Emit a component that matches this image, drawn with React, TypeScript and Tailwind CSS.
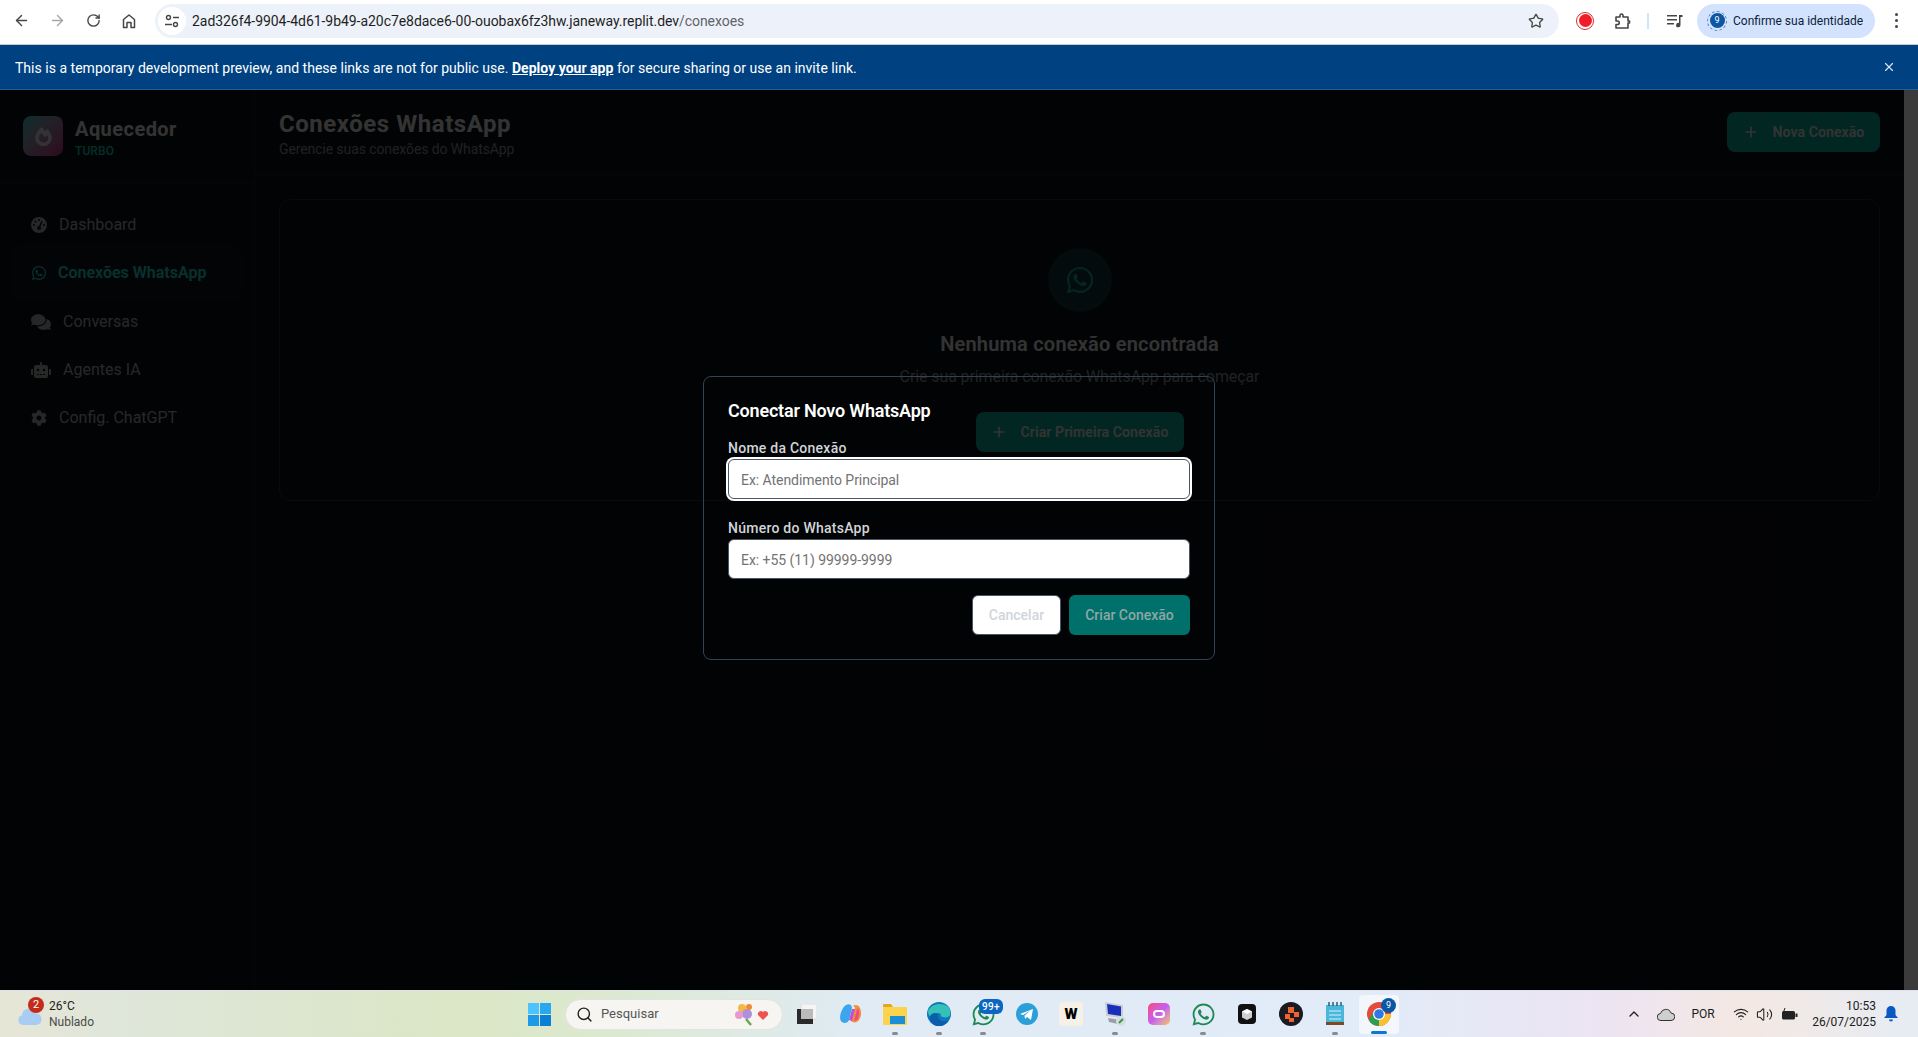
import React from "react";
import { ArrowLeft, ArrowRight, RotateCw, Star, X, Plus, Search, ChevronUp, Volume2, Wifi } from "lucide-react";
import { FaWhatsapp, FaComments, FaRobot, FaCog, FaFireAlt } from "react-icons/fa";
import { FaGaugeHigh } from "react-icons/fa6";

const nav = [
  { icon: <FaGaugeHigh size={16} />, label: "Dashboard", gap: "gap-[12px]", h: "h-[49px]" },
  { icon: <FaWhatsapp size={16} />, label: "Conexões WhatsApp", gap: "gap-[11px]", active: true, h: "h-[48px]" },
  { icon: <FaComments size={20} />, label: "Conversas", gap: "gap-[12px]", h: "h-[49px]" },
  { icon: <FaRobot size={20} />, label: "Agentes IA", gap: "gap-[12px]", h: "h-[48px]" },
  { icon: <FaCog size={16} />, label: "Config. ChatGPT", gap: "gap-[12px]", h: "h-[48px]" },
];

function Sidebar() {
  return (
    <aside className="w-[255px] shrink-0 bg-[#0d1117] border-r border-[#1a2027] flex flex-col">
      <div className="h-[93px] border-b border-[#1a2027] flex items-center pl-[23px] gap-[12px]">
        <div className="w-[40px] h-[40px] rounded-lg bg-gradient-to-br from-[#0fe0e0] to-[#e0199a] flex items-center justify-center text-white">
          <FaFireAlt size={19} />
        </div>
        <div className="flex flex-col mt-[2px]">
          <span className="text-[20px] leading-[28px] font-bold text-white tracking-[0.45px]">Aquecedor</span>
          <span className="text-[12px] leading-[16px] font-medium text-[#14e0ca] tracking-[0.1px]">TURBO</span>
        </div>
      </div>
      <nav className="px-[16px] pt-[17px] flex flex-col">
        {nav.map((n) => (
          <div
            key={n.label}
            className={`${n.h} rounded-lg flex items-center pl-[15px] ${n.gap} text-[16px] ${
              n.active ? "bg-[#10181c] text-[#2af0e6] font-semibold shadow-[0_0_12px_#14b8a620]" : "text-[#c4c4c4]"
            }`}
          >
            <span className="w-auto flex justify-center">{n.icon}</span>
            <span>{n.label}</span>
          </div>
        ))}
      </nav>
    </aside>
  );
}

function WhatsBtn({ label, w }: { label: string; w: string }) {
  return (
    <button className={`${w} h-[40px] rounded-lg bg-[#0abfaa] text-white text-[14px] font-semibold tracking-[0.1px] flex items-center justify-center gap-[14px]`}>
      <Plus size={16} strokeWidth={2.5} />
      {label}
    </button>
  );
}

function MainArea() {
  return (
    <main className="flex-1 min-w-0 bg-[#0d1117] flex flex-col">
      <header className="h-[85px] border-b border-[#1a2027] flex items-center justify-between px-[24px]">
        <div className="flex flex-col mt-[1px]">
          <h1 className="text-[24px] leading-[32px] font-bold text-white tracking-[0.55px]">Conexões WhatsApp</h1>
          <p className="text-[14px] leading-[18px] text-[#9ca3af] tracking-[-0.1px]">Gerencie suas conexões do WhatsApp</p>
        </div>
        <WhatsBtn label="Nova Conexão" w="w-[153px]" />
      </header>
      <div className="pt-[24px] px-[24px]">
        <div className="h-[302px] rounded-xl border border-[#2a323c] bg-[#0d1117] flex flex-col items-center pt-[48px]">
          <div className="w-[64px] h-[64px] rounded-full bg-[#0f3a3c] flex items-center justify-center text-[#14b8a6]">
            <FaWhatsapp size={30} />
          </div>
          <h2 className="mt-[18px] text-[20px] leading-[28px] font-semibold text-white tracking-[0.2px]">Nenhuma conexão encontrada</h2>
          <p className="mt-[7px] text-[16px] leading-[24px] text-[#9ca3af] tracking-[-0.1px]">Crie sua primeira conexão WhatsApp para começar</p>
          <div className="mt-[23px]">
            <WhatsBtn label="Criar Primeira Conexão" w="w-[208px]" />
          </div>
        </div>
      </div>
    </main>
  );
}

function Modal() {
  return (
    <div className="absolute inset-0 bg-black/80 flex justify-center items-start pt-[286px]">
      <div className="w-[512px] h-[284px] rounded-lg border border-[#334155] px-[24px] pt-[22px]">
        <h3 className="text-[18px] leading-[24px] font-semibold text-white tracking-[-0.2px]">Conectar Novo WhatsApp</h3>
        <label className="block mt-[15px] text-[14px] leading-[20px] font-medium text-[#d1d5db] tracking-[0.25px]">Nome da Conexão</label>
        <input
          placeholder="Ex: Atendimento Principal"
          className="block w-full h-[40px] mt-[1px] rounded-md bg-white border border-[#475569] pl-[12px] pt-[2px] text-[14px] tracking-[-0.05px] outline-none ring-2 ring-white placeholder:text-[#737373]"
        />
        <label className="block mt-[19px] text-[14px] leading-[20px] font-medium text-[#d1d5db] tracking-[0.25px]">Número do WhatsApp</label>
        <input
          placeholder="Ex: +55 (11) 99999-9999"
          className="block w-full h-[40px] mt-[1px] rounded-md bg-white border border-[#475569] pl-[12px] pt-[2px] text-[14px] tracking-[-0.05px] outline-none placeholder:text-[#737373]"
        />
        <div className="mt-[16px] flex justify-end gap-[8px]">
          <button className="w-[89px] h-[40px] rounded-md bg-white border border-[#475569] text-[14px] font-medium text-[#d1d5db]">Cancelar</button>
          <button className="w-[121px] h-[40px] rounded-md bg-[#00706b] text-[14px] font-medium text-[#8ea7a5]">Criar Conexão</button>
        </div>
      </div>
    </div>
  );
}

function ChromeBar() {
  return (
    <div className="h-[45px] bg-white border-b border-[#c9c9c9] flex items-center text-[#444746] pb-[3px] shrink-0">
      <div className="flex items-center pl-[3px]">
        <span className="w-[36px] flex justify-center"><ArrowLeft size={17} strokeWidth={2} /></span>
        <span className="w-[36px] flex justify-center text-[#a6a6a6]"><ArrowRight size={17} strokeWidth={2} /></span>
        <span className="w-[36px] flex justify-center"><RotateCw size={15} strokeWidth={2.2} /></span>
        <span className="w-[36px] flex justify-center">
          <svg width="16" height="16" viewBox="0 0 16 16" fill="none" stroke="#444746" strokeWidth="1.5"><path d="M2.5 14.5V6.5L8 2l5.500 4.500v8h-3.500V9.500h-4v5z" strokeLinejoin="round" /></svg>
        </span>
      </div>
      <div className="ml-[8px] w-[1404px] h-[34px] rounded-full bg-[#edf2fa] flex items-center pl-[3px] pr-[15px]">
        <span className="w-[28px] h-[28px] rounded-full bg-white flex items-center justify-center">
          <svg width="16" height="16" viewBox="0 0 16 16" fill="none" stroke="#444746" strokeWidth="1.4"><circle cx="4.500" cy="4.500" r="2" /><path d="M9 4.500h6M1 11.500h7" /><circle cx="11.500" cy="11.500" r="2" /></svg>
        </span>
        <span className="ml-[6px] mt-[1px] text-[14px] text-[#1f1f1f] tracking-[-0.05px]">2ad326f4-9904-4d61-9b49-a20c7e8dace6-00-ouobax6fz3hw.janeway.replit.dev<span className="text-[#5f6368]">/conexoes</span></span>
        <span className="ml-auto"><Star size={16} strokeWidth={2} /></span>
      </div>
      <span className="ml-[17px] w-[18px] h-[18px] rounded-full border-[1.5px] border-[#d32f2f] flex items-center justify-center"><span className="block w-[13px] h-[13px] rounded-full bg-[#f01c28]" /></span>
      <span className="ml-[19px]">
        <svg width="18" height="18" viewBox="0 0 18 18" fill="none" stroke="#444746" strokeWidth="1.6" strokeLinejoin="round"><path d="M3 5h4V3.500a1.500 1.500 0 0 1 3 0V5h5v4h1.500v2H15v5H3v-3.500h1.500a1.500 1.500 0 0 0 0-3.500H3z" /></svg>
      </span>
      <span className="ml-[16px] w-[2px] h-[16px] bg-[#d3e3fd]" />
      <span className="ml-[18px]">
        <svg width="16" height="14" viewBox="0 0 16 14" fill="#444746"><rect x="0" y="1" width="10" height="1.500" /><rect x="0" y="5" width="10" height="1.500" /><rect x="0" y="9" width="7" height="1.500" /><path d="M12 1h3.500v2H13.500v8a2.200 2.200 0 1 1-1.500-2z" /></svg>
      </span>
      <div className="ml-[14px] w-[178px] h-[34px] rounded-full bg-[#d3e3fd] flex items-center pl-[10px]">
        <span className="shrink-0 w-[20px] h-[20px] rounded-full border border-dashed border-[#5b7fb5] flex items-center justify-center">
          <span className="w-[15px] h-[15px] rounded-full bg-[#0b57a4] text-white text-[9px] leading-[15px] text-center">9</span>
        </span>
        <span className="ml-[6px] text-[12px] text-[#0b1d3a] whitespace-nowrap">Confirme sua identidade</span>
      </div>
      <span className="ml-[20px] flex flex-col gap-[3px]">
        <i className="block w-[3px] h-[3px] rounded-full bg-[#444746]" />
        <i className="block w-[3px] h-[3px] rounded-full bg-[#444746]" />
        <i className="block w-[3px] h-[3px] rounded-full bg-[#444746]" />
      </span>
    </div>
  );
}

function Banner() {
  return (
    <div className="h-[45px] bg-[#004182] border-b border-[#1f5c99] flex items-center justify-between pl-[15px] pr-[22px] pt-[2px] text-white text-[14px] tracking-[0.02px] shrink-0">
      <span>
        This is a temporary development preview, and these links are not for public use.{" "}
        <span className="font-bold underline">Deploy your app</span> for secure sharing or use an invite link.
      </span>
      <X size={14} className="text-[#dbe6f2] -mt-[2px]" />
    </div>
  );
}

const Dot = ({ on = true }: { on?: boolean }) => (on ? <i className="absolute bottom-[3px] left-1/2 -translate-x-1/2 w-[6px] h-[3px] rounded-full bg-[#858b90]" /> : null);

function TaskIcon({ children, dot, className = "" }: { children: React.ReactNode; dot?: boolean; className?: string }) {
  return (
    <div className={`relative w-[44px] h-[47px] flex items-center justify-center ${className}`}>
      {children}
      <Dot on={!!dot} />
    </div>
  );
}

function Taskbar() {
  return (
    <div className="h-[47px] shrink-0 border-t border-[#dfe4ea] bg-[linear-gradient(90deg,#e6e6d6_0%,#dfe6da_6%,#dbe7c6_24%,#dce9d0_32%,#e0ebf5_45%,#e2ebf8_72%,#ede4f2_84%,#f4e8e2_91%,#e6ecf4_100%)] flex items-center relative text-[#1c1c1c]">
      <div className="w-[528px] shrink-0 pl-[17px] flex items-center">
        <div className="relative w-[26px] h-[20px] mt-[4px]">
          <svg width="26" height="20" viewBox="0 0 26 20"><path d="M6 19a5 5 0 0 1-1-9.800 7 7 0 0 1 13.500-2 6 6 0 0 1 1.500 11.800z" fill="#a9cdf2" /></svg>
          <span className="absolute -top-[9px] left-[11px] w-[16px] h-[16px] rounded-full bg-[#c42b1c] text-white text-[11px] leading-[16px] text-center">2</span>
        </div>
        <div className="ml-[6px] flex flex-col text-[12px] leading-[16px]">
          <span>26°C</span>
          <span className="text-[#4a4a4a]">Nublado</span>
        </div>
      </div>
      <svg width="23" height="23" viewBox="0 0 23 23" className="shrink-0">
        <rect x="0" y="0" width="11" height="11" fill="#4cc2ff" /><rect x="12" y="0" width="11" height="11" fill="#2aa8ef" /><rect x="0" y="12" width="11" height="11" fill="#1b9ae8" /><rect x="12" y="12" width="11" height="11" fill="#0a7fd6" />
      </svg>
      <div className="ml-[14px] w-[218px] h-[31px] rounded-full bg-[#f6f5f1] border border-[#e3e3e3] flex items-center pl-[10px] pr-[12px] shrink-0">
        <Search size={17} strokeWidth={2} className="text-[#222]" />
        <span className="ml-[8px] text-[13px] text-[#555]">Pesquisar</span>
        <span className="ml-auto flex items-center">
          <svg width="38" height="24" viewBox="0 0 38 24"><circle cx="10" cy="6" r="4" fill="#f4b942" /><circle cx="15" cy="12" r="5" fill="#b08fdc" /><circle cx="7" cy="13" r="4" fill="#e69ad0" /><circle cx="17" cy="5" r="3" fill="#ee8b33" /><path d="M14 17l5 6" stroke="#6aa84f" strokeWidth="2.500" /><path d="M31 18l-5-5a3 3 0 0 1 5-3 3 3 0 0 1 5 3z" fill="#ef5350" /></svg>
        </span>
      </div>
      <div className="ml-[2px] flex items-center">
        <TaskIcon>
          <svg width="20" height="20" viewBox="0 0 20 20"><rect x="4" y="0" width="16" height="15" fill="#f5f5f5" stroke="#ddd" /><rect x="0" y="5" width="16" height="15" fill="#2a2a2a" /><rect x="4" y="5" width="12" height="10" fill="#bbb" /></svg>
        </TaskIcon>
        <TaskIcon>
          <svg width="24" height="24" viewBox="0 0 24 24"><path d="M7 3c3-2 6 0 6 3l-3 12c-1 3-5 4-7 2C0 18 1 12 3 8c1-2 2-4 4-5z" fill="#3da5ee" /><path d="M14 4c2-2 6-1 7 2 2 5 1 9-1 12-2 3-6 3-8 1l4-13c0-1-1-2-2-2z" fill="#f78b3c" /><path d="M10 18l3-11 3 0-3 12z" fill="#c04fd6" /><path d="M19 6c2 4 1 9-1 12l-3 1 3-11z" fill="#e84b8a" /></svg>
        </TaskIcon>
        <TaskIcon dot>
          <svg width="24" height="22" viewBox="0 0 24 22"><path d="M0 2a1 1 0 0 1 1-1h7l2 3H0z" fill="#e6a817" /><rect x="0" y="4" width="24" height="18" rx="1" fill="#fbd34d" /><rect x="7" y="13" width="15" height="8" fill="#1a8fd8" /></svg>
        </TaskIcon>
        <TaskIcon dot>
          <svg width="24" height="24" viewBox="0 0 24 24"><circle cx="12" cy="12" r="12" fill="#0f78bd" /><path d="M1 9C4 2 14 0 20 4c3 2 4 6 3 9-1 2-4 3-7 2-2 0-3-2-2-3-3-2-7-1-9 2C3 16 1 12 1 9z" fill="#35c1b8" /><path d="M10 24c-5-1-8-6-7-10 2-3 5-4 8-2-1 3 1 6 4 7 3 1 5 0 7-1-2 4-7 7-12 6z" fill="#0b5ea8" /></svg>
        </TaskIcon>
        <TaskIcon dot>
          <FaWhatsapp size={25} className="text-[#1d8a55] mt-[1px]" />
          <span className="absolute top-[8px] left-[18px] px-[3px] h-[15px] rounded-[6px] bg-[#0a66c2] text-white text-[10px] leading-[15px] font-medium tracking-[0.3px] whitespace-nowrap">99+</span>
        </TaskIcon>
        <TaskIcon>
          <svg width="22" height="22" viewBox="0 0 22 22"><circle cx="11" cy="11" r="11" fill="#2a9fd8" /><path d="M4 11l13-5-2 11-4-3-2 2-.5-3.500 6-5-7.500 4.500z" fill="#fff" /></svg>
        </TaskIcon>
        <TaskIcon>
          <span className="w-[24px] h-[24px] rounded-[3px] bg-[#f6f1e6] text-black text-[15px] font-black leading-[24px] text-center">W</span>
        </TaskIcon>
        <TaskIcon dot>
          <svg width="24" height="26" viewBox="0 0 24 26"><path d="M2 1l18 3v13L3 15z" fill="#c9ced6" /><path d="M4 3l14 2.500v9.500L5 13z" fill="#1a2fb8" /><path d="M5 17l13 2-3 4-9-2z" fill="#9aa0a8" /><circle cx="18" cy="20" r="5" fill="#d8dde0" /><path d="M16 22l4-4" stroke="#2e9b4b" strokeWidth="2" /></svg>
        </TaskIcon>
        <TaskIcon>
          <span className="w-[22px] h-[22px] rounded-[5px] bg-gradient-to-br from-[#f6417c] via-[#c85cf0] to-[#f5c13d] flex items-center justify-center">
            <span className="w-[12px] h-[8px] rounded-full border-2 border-white" />
          </span>
        </TaskIcon>
        <TaskIcon dot><FaWhatsapp size={25} className="text-[#1d8a55]" /></TaskIcon>
        <TaskIcon>
          <span className="w-[18px] h-[20px] rounded-[4px] bg-[#111] flex items-center justify-center">
            <svg width="10" height="11" viewBox="0 0 10 11"><path d="M5 0l5 2.500v6L5 11 0 8.500v-6z" fill="#cfcfcf" /><path d="M5 5L0 2.500 5 0l5 2.500z" fill="#fff" /></svg>
          </span>
        </TaskIcon>
        <TaskIcon>
          <svg width="24" height="24" viewBox="0 0 24 24"><circle cx="12" cy="12" r="12" fill="#1a1a22" /><rect x="9" y="5" width="6" height="6" fill="#f0622d" /><rect x="15" y="10" width="5" height="5" fill="#f0622d" /><rect x="6" y="12" width="5" height="5" fill="#f0622d" /><rect x="10" y="16" width="5" height="4" fill="#f0622d" /></svg>
        </TaskIcon>
        <TaskIcon dot>
          <svg width="18" height="24" viewBox="0 0 18 24"><rect x="0" y="3" width="18" height="19" fill="#49b6dc" /><rect x="0" y="20" width="18" height="3" fill="#7a4a21" /><path d="M3 0v4M7 0v4M11 0v4M15 0v4" stroke="#2f5d73" strokeWidth="1.500" /><path d="M3 9h12M3 13h12M3 17h12" stroke="#d8f0f8" strokeWidth="1" /></svg>
        </TaskIcon>
        <div className="relative w-[40px] h-[39px] mx-[2px] rounded-[4px] bg-white/60 flex items-center justify-center">
          <svg width="24" height="24" viewBox="0 0 24 24">
            <circle cx="12" cy="12" r="12" fill="#e64a3b" />
            <path d="M12 24A12 12 0 0 1 1.600 18L7 8.500 12 12l5 3z" fill="#2e9d4f" />
            <path d="M12 24a12 12 0 0 0 12-12H12z" fill="#fbc02d" />
            <circle cx="12" cy="12" r="6" fill="#fff" /><circle cx="12" cy="12" r="4.800" fill="#2f78e4" />
          </svg>
          <span className="absolute top-[3px] right-[3px] w-[15px] h-[15px] rounded-full bg-[#0b57a4] text-white text-[9px] leading-[15px] text-center">9</span>
          <i className="absolute bottom-[0px] left-1/2 -translate-x-1/2 w-[16px] h-[3px] rounded-full bg-[#0a78d4]" />
        </div>
      </div>
      <div className="ml-auto pr-[20px] flex items-center">
        <ChevronUp size={16} strokeWidth={2} className="text-[#222]" />
        <svg width="18" height="13" viewBox="0 0 18 13" className="ml-[15px]"><path d="M4 12.500a3.500 3.500 0 0 1-.5-7 5.500 5.500 0 0 1 10.500-.5 3.700 3.700 0 0 1 0 7.500z" fill="#cfcfcf" stroke="#333" strokeWidth="1" /></svg>
        <span className="ml-[16px] text-[12px] w-[24px] text-center">POR</span>
        <Wifi size={16} strokeWidth={1.7} className="ml-[18px] text-[#222]" />
        <Volume2 size={17} strokeWidth={1.5} className="ml-[7px] text-[#222]" />
        <svg width="17" height="13" viewBox="0 0 17 13" className="ml-[8px]"><rect x="1" y="3" width="13" height="8.500" rx="1.500" fill="#222" /><rect x="14.500" y="5.500" width="2" height="3.500" fill="#222" /><path d="M4 0L2.500 4 5 4 3.500 7" stroke="#222" strokeWidth="1" fill="none" /></svg>
        <div className="ml-[14px] flex flex-col items-end text-[12px] leading-[16px]">
          <span>10:53</span>
          <span>26/07/2025</span>
        </div>
        <svg width="14" height="16" viewBox="0 0 14 16" className="ml-[8px]"><path d="M7 0a4.500 4.500 0 0 1 4.500 4.500V9L14 12H0l2.500-3V4.500A4.500 4.500 0 0 1 7 0z" fill="#0a58c2" /><path d="M5 13.500h4a2 2 0 0 1-4 0z" fill="#0a58c2" /></svg>
      </div>
    </div>
  );
}

export default function App() {
  return (
    <div className="w-[1918px] h-[1037px] overflow-hidden flex flex-col font-['Roboto',sans-serif] bg-black">
      <ChromeBar />
      <Banner />
      <div className="relative flex-1 min-h-0 flex">
        <Sidebar />
        <MainArea />
        <div className="w-[14px] shrink-0" />
        <Modal />
        <div className="absolute top-0 right-0 bottom-0 w-[14px] bg-[#3b3b3b]" />
      </div>
      <Taskbar />
    </div>
  );
}
